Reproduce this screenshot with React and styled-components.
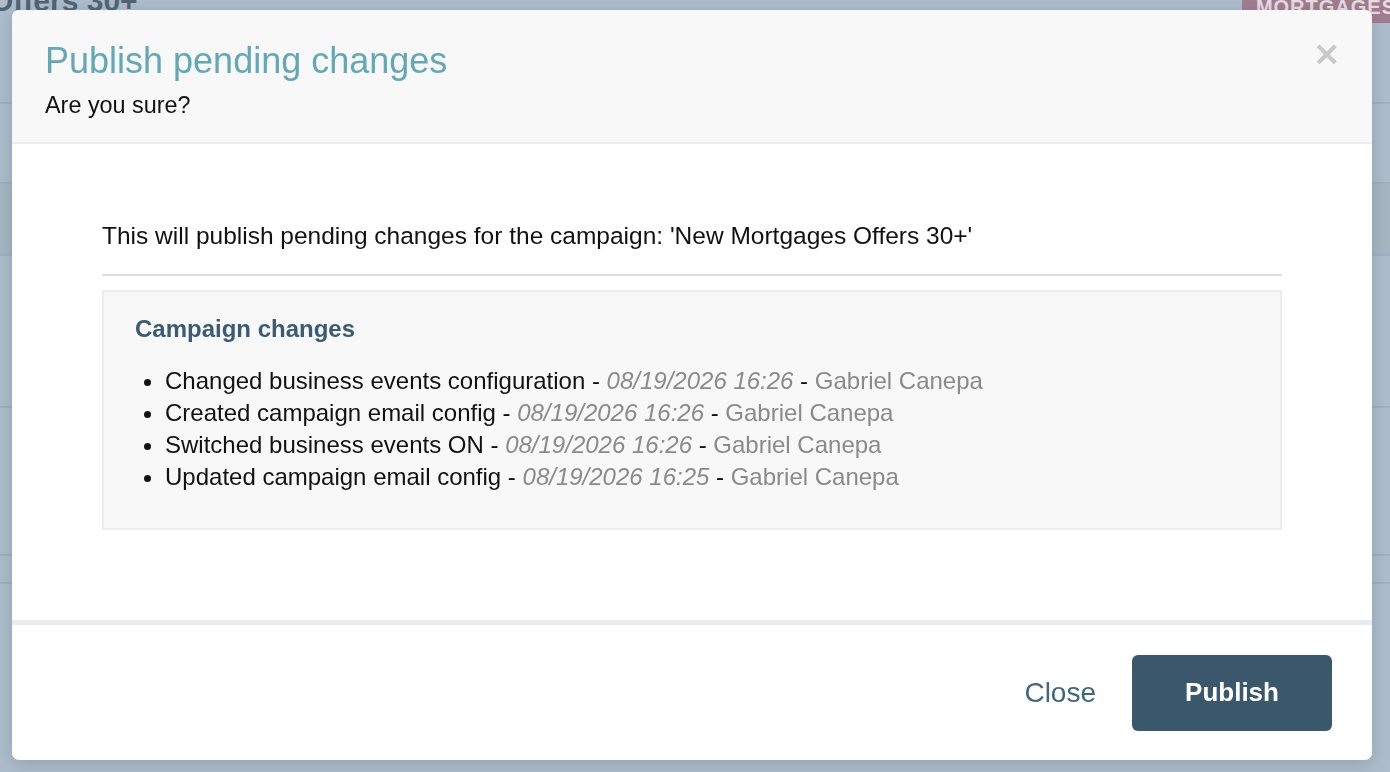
import React from "react"
import styled, { createGlobalStyle } from "styled-components"

const GlobalStyle = createGlobalStyle`
  html, body { margin: 0; padding: 0; height: 100%; }
  body { font-family: "Liberation Sans", Arial, sans-serif; background: #aab9c9; overflow: hidden; }
  #root { height: 100%; }
`

// the page behind the dialog
const Page = styled.div`height: 772px; background: #aebdcc; position: relative; overflow: hidden;`
const PageTitle = styled.div`font-size: 30px; font-weight: bold; color: #3b4f60; margin: -16px 0 0 -240px; opacity: .8;`
const Badge = styled.span`position: absolute; right: -20px; top: -8px; background: #a37d8f; color: #e8dde4; font-weight: bold; font-size: 20px; padding: 4px 14px; letter-spacing: 1px;`
const PageRow = styled.div`height: ${p => p.h}px; border-bottom: 2px solid #a1b0c0; background: ${p => p.tint || "transparent"};`

const Backdrop = styled.div`position: fixed; inset: 0; display: flex; align-items: flex-start; justify-content: flex-start; padding: 10px 0 0 12px;`

const Dialog = styled.div`width: 1360px; height: 750px; background: #fff; border-radius: 7px; display: flex; flex-direction: column; overflow: hidden; box-shadow: 0 4px 18px rgba(60,80,100,.25);`

const Header = styled.header`background: #f8f8f8; border-bottom: 2px solid #ececec; padding: 38px 33px 24px; display: flex; justify-content: space-between; align-items: flex-start;`
const Title = styled.h2`margin: 0; font-weight: normal; font-size: 36px; line-height: 26px; color: #63a9b5;`
const Subtitle = styled.p`margin: 18px 0 0; font-size: 23.4px; line-height: 26px; color: #111;`
const CloseX = styled.button`border: 0; background: none; padding: 0; margin: -10px -2px 0 0; font-size: 34px; line-height: 30px; font-weight: bold; color: #c8c8c8; cursor: pointer; font-family: "DejaVu Sans", sans-serif;`

const Body = styled.section`flex: 1; padding: 76px 90px 0;`
const Lead = styled.p`margin: 0; font-size: 24.5px; line-height: 32px; color: #111;`
const Rule = styled.hr`border: 0; border-top: 2px solid #dedede; margin: 22px 0 14px;`
const ChangesBox = styled.div`background: #f8f8f8; border: 2px solid #ededed; padding: 24px 31px 35px;`
const BoxTitle = styled.h3`margin: 0; font-size: 24px; line-height: 26px; color: #3b5b72; font-weight: bold;`
const List = styled.ul`margin: 23px 0 0; padding-left: 30px; font-size: 24px; line-height: 32px; color: #111;`
const When = styled.em`color: #8a8a8a;`
const Who = styled.span`color: #8a8a8a;`

const Footer = styled.footer`height: 135px; border-top: 5px solid #e8ecef; display: flex; justify-content: flex-end; align-items: center; padding: 0 40px; gap: 36px;`
const LinkButton = styled.button`border: 0; background: none; padding: 0; font-family: inherit; font-size: 28px; color: #3e6780; cursor: pointer;`
const PrimaryButton = styled.button`border: 0; width: 200px; height: 76px; border-radius: 6px; background: #3a576b; color: #fff; font-family: inherit; font-size: 26px; font-weight: bold; cursor: pointer;`

const changes = [
  { what: "Changed business events configuration", when: "08/19/2026 16:26", who: "Gabriel Canepa" },
  { what: "Created campaign email config", when: "08/19/2026 16:26", who: "Gabriel Canepa" },
  { what: "Switched business events ON", when: "08/19/2026 16:26", who: "Gabriel Canepa" },
  { what: "Updated campaign email config", when: "08/19/2026 16:25", who: "Gabriel Canepa" },
]

export default function App() {
  return (
    <>
      <GlobalStyle />
      <Page>
        <PageTitle>New Mortgages Offers 30+</PageTitle>
        <Badge>MORTGAGES</Badge>
        <PageRow h={84} />
        <PageRow h={78} />
        <PageRow h={70} tint="#a6b7c2" />
        <PageRow h={150} />
        <PageRow h={146} />
        <PageRow h={26} />
      </Page>
      <Backdrop>
        <Dialog role="dialog">
          <Header>
            <div>
              <Title>Publish pending changes</Title>
              <Subtitle>Are you sure?</Subtitle>
            </div>
            <CloseX aria-label="Close">×</CloseX>
          </Header>
          <Body>
            <Lead>This will publish pending changes for the campaign: 'New Mortgages Offers 30+'</Lead>
            <Rule />
            <ChangesBox>
              <BoxTitle>Campaign changes</BoxTitle>
              <List>
                {changes.map((c, i) => (
                  <li key={i}>
                    {c.what} - <When>{c.when}</When> - <Who>{c.who}</Who>
                  </li>
                ))}
              </List>
            </ChangesBox>
          </Body>
          <Footer>
            <LinkButton>Close</LinkButton>
            <PrimaryButton>Publish</PrimaryButton>
          </Footer>
        </Dialog>
      </Backdrop>
    </>
  )
}
